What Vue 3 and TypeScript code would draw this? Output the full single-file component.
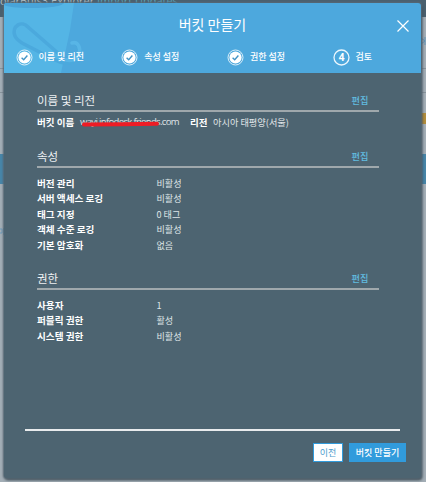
<script setup lang="ts">
interface Row { label: string; value: string }
interface Section { title: string; rows: Row[]; kind: string }

const steps: string[] = ['이름 및 리전', '속성 설정', '권한 설정', '검토']

const sections: Section[] = [
  {
    title: '속성',
    kind: 'properties',
    rows: [
      { label: '버전 관리', value: '비활성' },
      { label: '서버 액세스 로깅', value: '비활성' },
      { label: '태그 지정', value: '0 태그' },
      { label: '객체 수준 로깅', value: '비활성' },
      { label: '기본 암호화', value: '없음' },
    ],
  },
  {
    title: '권한',
    kind: 'permissions',
    rows: [
      { label: '사용자', value: '1' },
      { label: '퍼블릭 권한', value: '활성' },
      { label: '시스템 권한', value: '비활성' },
    ],
  },
]
</script>

<template>
  <div class="page">
    <div class="backdrop">
      <div class="topbar"><span>olarBuis3 Explorer <i>Import Updates</i></span></div>
      <div class="band tools"><svg width="5" height="8" viewBox="0 0 5 8"><path d="M0 1L4 4L0 7M4 0V8" fill="none" stroke="#6293b5" /></svg></div>
      <div class="band filter"></div>
      <div class="band list"><b class="tag"></b></div>
      <div class="band selected"></div>
      <div class="band rest"><svg width="4" height="7" viewBox="0 0 4 7"><path d="M0 1H2V5H0M3.5 0V7" fill="none" stroke="#6d98b7" /></svg></div>
    </div>

    <section class="modal">
      <header class="head">
        <svg class="bucket" width="86" height="70" viewBox="0 0 86 70">
          <path d="M0 0H70L66 27L57 70H0Z" fill="#54b5e5" />
          <path d="M0 0H60C57 4 42 5 25 5C13 5 4 4 0 2Z" fill="#48a4d9" />
          <path d="M62 57L24 24C18 17 7 23 11 33C12 36 15 38 18 40L51 57C64 64 76 58 75 47C74 42 72 40 70 40" fill="none" stroke="#4ba9dd" stroke-width="3.6" stroke-linecap="round" />
          <path d="M68 40C74 38 77 45 75 51C73 57 67 58 62 57" fill="none" stroke="#58b5e6" stroke-width="3.6" stroke-linecap="round" />
        </svg>
        <h1>버킷 만들기</h1>
        <svg class="close" width="12" height="12" viewBox="0 0 12 12">
          <path d="M.5 .5L11.5 11.5M11.5 .5L.5 11.5" stroke="#fff" stroke-width="1.2" />
        </svg>
        <ol class="steps">
          <li v-for="(step, i) in steps" :key="step">
            <svg width="17" height="17" viewBox="0 0 17 17">
              <circle cx="8.5" cy="8.5" r="7.5" fill="none" stroke="#eaf6fd" :stroke-width="i < 3 ? 0.9 : 1.3" />
              <template v-if="i < 3">
                <circle cx="8.5" cy="8.5" r="6.1" fill="#fff" />
                <path d="M5.6 8.7L7.7 10.7L11.4 6.5" fill="none" stroke="#4294c6" stroke-width="1.4" />
              </template>
              <text v-else x="8.5" y="12" text-anchor="middle">4</text>
            </svg>
            <span>{{ step }}</span>
          </li>
        </ol>
      </header>

      <main class="body">
        <section class="block names">
          <div class="title"><h2>이름 및 리전</h2><a>편집</a></div>
          <div class="summary">
            <b>버킷 이름</b>
            <span class="bucket-name">wayi.infodesk.friends.com
              <svg class="mark" width="80" height="6" viewBox="0 0 80 6"><path d="M3 3.6L40 3.3L76 2.7" stroke="#ee1c25" stroke-width="4" stroke-linecap="round" fill="none" /></svg>
            </span>
            <b>리전</b>
            <span class="region">아시아 태평양(서울)</span>
          </div>
        </section>

        <section v-for="s in sections" :key="s.kind" class="block" :class="s.kind">
          <div class="title"><h2>{{ s.title }}</h2><a>편집</a></div>
          <dl>
            <div v-for="r in s.rows" :key="r.label" class="row">
              <dt>{{ r.label }}</dt>
              <dd>{{ r.value }}</dd>
            </div>
          </dl>
        </section>
      </main>

      <footer class="foot">
        <button class="prev">이전</button>
        <button class="create">버킷 만들기</button>
      </footer>
    </section>
  </div>
</template>

<style>
body { margin: 0; overflow: hidden; }
</style>

<style scoped>
* { box-sizing: border-box; }
.page {
  position: relative;
  width: 426px;
  height: 482px;
  overflow: hidden;
  background: #a3aeb6;
  font-family: "Noto Sans CJK KR", sans-serif;
  color: #fff;
}
.backdrop { display: flex; flex-direction: column; height: 482px; }
.topbar {
  height: 17px;
  background: #4a606e;
  overflow: hidden;
  font: 11px/12px "Open Sans", sans-serif;
  color: #b4c0c7;
}
.topbar span { display: block; margin-top: -5px; white-space: nowrap; }
.topbar i { font-style: normal; color: #5aa4b9; }
.band { border-bottom: 1px solid #87939b; }
.tools { height: 52px; display: flex; justify-content: flex-end; padding-top: 20px; }
.filter { height: 24px; }
.list { height: 61px; display: flex; justify-content: flex-end; padding-top: 20px; border: 0; }
.tag { width: 6px; height: 11px; background: #b18c3c; }
.selected { height: 30px; background: #4685a8; border: 0; }
.rest { flex: 1; border: 0; padding-top: 44px; line-height: 0; }

.modal {
  position: absolute;
  left: 4px;
  top: 3px;
  width: 417px;
  height: 475px;
  display: flex;
  flex-direction: column;
  border-radius: 3px;
  background: #4d6471;
  box-shadow: 0 0 2px 1px #586975, 1px 2px 3px #34424b;
}
.head {
  position: relative;
  height: 70px;
  flex: none;
  display: flex;
  flex-direction: column;
  border-radius: 3px 3px 0 0;
  overflow: hidden;
  background: #4da8dd;
}
.bucket { position: absolute; left: 0; top: 0; }
.close { position: absolute; left: 393px; top: 17px; }
h1 {
  margin: 11px 0 0;
  text-align: center;
  font-size: 14px;
  line-height: 21px;
  font-weight: 400;
}
.steps {
  position: relative;
  display: grid;
  grid-template-columns: repeat(4, 105.7px);
  margin: 14px 0 0 11.5px;
  padding: 0;
  list-style: none;
}
.steps li {
  display: flex;
  align-items: center;
  height: 17px;
  gap: 6px;
  font-size: 9px;
  font-weight: 500;
  line-height: 17px;
  white-space: nowrap;
}
.steps li span { position: relative; top: -1px; }
.steps text { font: 700 10px "Open Sans", sans-serif; fill: #fff; }

.body { padding: 17px 42.5px 0 33px; height: 353px; flex: none; }
.title {
  display: flex;
  justify-content: space-between;
  align-items: center;
  height: 22px;
  padding-right: 10px;
  border-bottom: 2px solid #9fa8ac;
}
h2 { margin: 0 0 1px; font-size: 11.5px; line-height: 18px; font-weight: 400; color: #eef1f3; }
.title a { font-size: 9.2px; line-height: 18px; font-weight: 500; color: #61bce0; }
.summary {
  display: flex;
  height: 20px;
  align-items: center;
  font-size: 9.5px;
  line-height: 16px;
  white-space: nowrap;
}
.summary b { font-weight: 600; }
.summary span { color: #e0e5e8; }
.summary > b:first-child { width: 43px; }
.summary .bucket-name {
  position: relative;
  width: 110px;
  font: 9.5px/16px "Open Sans", sans-serif;
  letter-spacing: -0.65px;
  flex: none;
}
.summary > b:nth-child(3) { width: 23px; }
.summary .region { font-size: 9.2px; }
.mark { position: absolute; left: 1px; top: 7px; }
.names { height: 56px; }
.properties { height: 122px; }
dl { margin: 0; padding-top: 7.5px; }
.row {
  display: grid;
  grid-template-columns: 119.5px 1fr;
  height: 15.5px;
  font-size: 9.6px;
  line-height: 15.5px;
}
dt { font-weight: 600; }
dd { margin: 0; font-size: 9.1px; color: #dfe4e7; }

.foot {
  display: flex;
  justify-content: flex-end;
  align-items: flex-start;
  gap: 6px;
  margin: 3px 21px 0;
  padding: 12px 0 0;
  border-top: 2px solid #e8ebed;
}
.foot button {
  height: 19px;
  padding: 0;
  border: 1px solid #319bdc;
  border-radius: 0;
  background: #319bdc;
  color: #fff;
  font: 500 9px/15px "Noto Sans CJK KR", sans-serif;
}
.foot .prev { width: 30px; background: #fff; color: #4d9dcd; font-weight: 400; }
.foot .create { width: 57px; margin-right: -6px; }
</style>
